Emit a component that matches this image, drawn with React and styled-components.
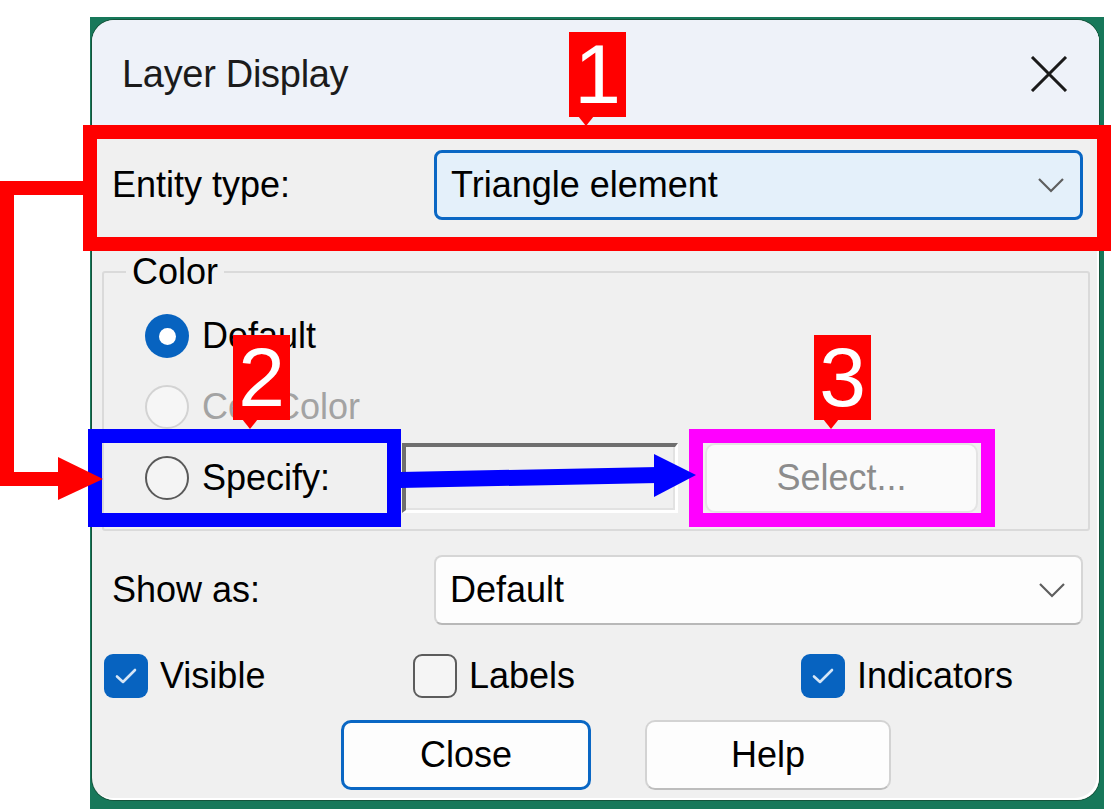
import React from "react";
import styled, { createGlobalStyle, css } from "styled-components";

const GlobalStyle = createGlobalStyle`
  html, body { margin: 0; padding: 0; background: #ffffff; }
  body { font-family: "Liberation Sans", Arial, sans-serif; }
  * { box-sizing: border-box; }
`;

const Page = styled.div`
  position: relative;
  width: 1111px;
  height: 809px;
  overflow: hidden;
  padding: 17px 7px 0 90px;
  background: #ffffff;
`;

const Desktop = styled.div`
  height: 792px;
  padding: 3px 5px 9px 2px;
  background: #17785a;
`;

const Dialog = styled.div`
  height: 100%;
  display: flex;
  flex-direction: column;
  border-radius: 22px;
  overflow: hidden;
  background: #f0f0f0;
  box-shadow: 0 0 0 1px rgba(20, 60, 40, 0.6), inset -2px -2px 0 #ffffff;
  font-size: 36px;
  color: #000;
`;

const TitleBar = styled.div`
  height: 108px;
  flex: none;
  display: flex;
  align-items: center;
  justify-content: space-between;
  padding: 0 31px 0 30px;
  background: #eef2f9;
`;

const Title = styled.span`
  font-size: 38px;
  color: #1b1b1b;
  letter-spacing: -0.3px;
`;

const CloseGlyph = styled.svg`
  width: 38px;
  height: 36px;
  display: block;
`;

const Body = styled.div`
  flex: 1;
  display: flex;
  flex-direction: column;
  padding: 22px 16px 10px 20px;
`;

const FieldRow = styled.div`
  display: grid;
  grid-template-columns: 322px 1fr;
  align-items: center;
  height: 70px;
  margin-top: ${(p) => p.$mt || 0}px;
`;

const Label = styled.span`
  color: ${(p) => (p.$disabled ? "#a3a3a3" : "#000")};
  white-space: nowrap;
`;

const Combo = styled.div`
  height: 70px;
  display: flex;
  align-items: center;
  justify-content: space-between;
  padding: 0 15px 0 14px;
  border-radius: 8px;
  ${(p) =>
    p.$focused
      ? css`
          background: #e4f0fa;
          border: 3px solid #0a67c4;
        `
      : css`
          background: #fdfdfd;
          border: 2px solid #d6d6d6;
          border-bottom-color: #b8b8b8;
        `}
`;

const Chevron = styled.svg`
  width: 28px;
  height: 16px;
  display: block;
`;

const GroupBox = styled.div`
  position: relative;
  margin: 51px -7px 0 -10px;
  height: 260px;
  border: 2px solid #dadada;
  border-radius: 3px;
  padding: 41px 0 0 41px;
  display: flex;
  flex-direction: column;
`;

const GroupLegend = styled.span`
  position: absolute;
  top: -21px;
  left: 22px;
  padding: 0 6px;
  background: #f0f0f0;
  line-height: 40px;
`;

const OptionRow = styled.div`
  display: flex;
  align-items: center;
  height: ${(p) => p.$h || 44}px;
  margin-top: ${(p) => p.$mt || 0}px;
`;

const RadioLabel = styled.label`
  display: flex;
  align-items: center;
  gap: 13px;
  width: ${(p) => (p.$w ? `${p.$w}px` : "auto")};
  flex: none;
`;

const Radio = styled.span`
  width: 44px;
  height: 44px;
  flex: none;
  border-radius: 50%;
  display: flex;
  align-items: center;
  justify-content: center;
  ${(p) =>
    p.$checked
      ? css`
          background: #0763c0;
          &::after {
            content: "";
            width: 17px;
            height: 17px;
            border-radius: 50%;
            background: #ffffff;
          }
        `
      : p.$disabled
      ? css`
          border: 2px solid #d3d3d3;
          background: #f6f6f6;
        `
      : css`
          border: 2px solid #595959;
          background: #f4f4f4;
        `}
`;

const Swatch = styled.div`
  width: 276px;
  height: 70px;
  flex: none;
  background: #f0f0f0;
  border-top: 4px solid #6e6e6e;
  border-left: 4px solid #6e6e6e;
  border-right: 3px solid #ffffff;
  border-bottom: 3px solid #ffffff;
  box-shadow: inset -2px -2px 0 #e2e2e2;
`;

const PushButton = styled.div`
  width: ${(p) => p.$w}px;
  height: 70px;
  flex: none;
  display: flex;
  align-items: center;
  justify-content: center;
  border-radius: 10px;
  ${(p) =>
    p.$variant === "default"
      ? css`
          background: #fdfdfd;
          border: 3px solid #0a67c4;
          color: #000;
        `
      : p.$variant === "disabled"
      ? css`
          background: #fafafa;
          border: 2px solid #e4e4e4;
          color: #8c8c8c;
        `
      : css`
          background: #fdfdfd;
          border: 2px solid #d3d3d3;
          border-bottom-color: #bdbdbd;
          color: #000;
        `}
  margin-left: ${(p) => p.$ml || 0}px;
`;

const CheckRow = styled.div`
  display: grid;
  grid-template-columns: 309px 388px auto;
  align-items: center;
  height: 44px;
  margin: 29px 0 0 -8px;
`;

const CheckLabel = styled.label`
  display: flex;
  align-items: center;
  gap: 12px;
`;

const Box = styled.span`
  width: 44px;
  height: 44px;
  flex: none;
  border-radius: 9px;
  display: flex;
  align-items: center;
  justify-content: center;
  ${(p) =>
    p.$checked
      ? css`
          background: #0763c0;
        `
      : css`
          border: 2px solid #5c5c5c;
          background: #f5f5f5;
        `}
`;

const ButtonRow = styled.div`
  display: flex;
  gap: 54px;
  margin-top: 22px;
  padding-left: 229px;
`;

/* ---------- annotation overlays ---------- */

const Overlay = styled.svg`
  position: absolute;
  left: 0;
  top: 0;
  width: 1111px;
  height: 809px;
  pointer-events: none;
`;

const Frame = styled.div`
  position: absolute;
  left: ${(p) => p.$x}px;
  top: ${(p) => p.$y}px;
  width: ${(p) => p.$w}px;
  height: ${(p) => p.$h}px;
  border: 14px solid ${(p) => p.$color};
  pointer-events: none;
`;

const Badge = styled.div`
  position: absolute;
  left: ${(p) => p.$x}px;
  top: ${(p) => p.$y}px;
  width: 57px;
  height: 85px;
  background: #ff0000;
  color: #ffffff;
  font-family: "Liberation Sans", Arial, sans-serif;
  font-size: 84px;
  line-height: 85px;
  text-align: center;
  &::after {
    content: "";
    position: absolute;
    left: 9px;
    bottom: -9px;
    border-left: 8px solid transparent;
    border-right: 8px solid transparent;
    border-top: 10px solid #ff0000;
  }
`;

const Check = () => (
  <svg width="26" height="20" viewBox="0 0 26 20">
    <path d="M4 10.5 L10 16 L22 4" fill="none" stroke="#d6e6f6" strokeWidth="2.6" strokeLinecap="round" strokeLinejoin="round" />
  </svg>
);

const Down = () => (
  <Chevron viewBox="0 0 28 16">
    <path d="M2 2 L14 14 L26 2" fill="none" stroke="#5e5e5e" strokeWidth="2.2" />
  </Chevron>
);

export default function App() {
  return (
    <>
      <GlobalStyle />
      <Page>
        <Desktop>
          <Dialog>
            <TitleBar>
              <Title>Layer Display</Title>
              <CloseGlyph viewBox="0 0 38 36">
                <path d="M2 1 L36 35 M36 1 L2 35" stroke="#1a1a1a" strokeWidth="3" />
              </CloseGlyph>
            </TitleBar>
            <Body>
              <FieldRow>
                <Label>Entity type:</Label>
                <Combo $focused>
                  <span>Triangle element</span>
                  <Down />
                </Combo>
              </FieldRow>

              <GroupBox>
                <GroupLegend>Color</GroupLegend>
                <OptionRow>
                  <RadioLabel>
                    <Radio $checked />
                    <Label>Default</Label>
                  </RadioLabel>
                </OptionRow>
                <OptionRow $mt={27}>
                  <RadioLabel>
                    <Radio $disabled />
                    <Label $disabled>Cell Color</Label>
                  </RadioLabel>
                </OptionRow>
                <OptionRow $mt={14} $h={70}>
                  <RadioLabel $w={257}>
                    <Radio />
                    <Label>Specify:</Label>
                  </RadioLabel>
                  <Swatch />
                  <PushButton $w={273} $ml={27} $variant="disabled">
                    Select...
                  </PushButton>
                </OptionRow>
              </GroupBox>

              <FieldRow $mt={24}>
                <Label>Show as:</Label>
                <Combo>
                  <span>Default</span>
                  <Down />
                </Combo>
              </FieldRow>

              <CheckRow>
                <CheckLabel>
                  <Box $checked>
                    <Check />
                  </Box>
                  <Label>Visible</Label>
                </CheckLabel>
                <CheckLabel>
                  <Box />
                  <Label>Labels</Label>
                </CheckLabel>
                <CheckLabel>
                  <Box $checked>
                    <Check />
                  </Box>
                  <Label>Indicators</Label>
                </CheckLabel>
              </CheckRow>

              <ButtonRow>
                <PushButton $w={250} $variant="default">Close</PushButton>
                <PushButton $w={246}>Help</PushButton>
              </ButtonRow>
            </Body>
          </Dialog>
        </Desktop>

        <Frame $x={83} $y={125} $w={1028} $h={126} $color="#ff0000" />
        <Frame $x={88} $y={429} $w={313} $h={98} $color="#0000ff" />
        <Frame $x={689} $y={429} $w={306} $h={98} $color="#ff00ff" />

        <Overlay viewBox="0 0 1111 809">
          <polyline points="83,188 7,188 7,479 62,479" fill="none" stroke="#ff0000" strokeWidth="14" strokeLinejoin="miter" />
          <polygon points="58,457 58,500 103,479" fill="#ff0000" />
          <line x1="400" y1="480" x2="658" y2="475" stroke="#0000ff" strokeWidth="16" />
          <polygon points="654,454 654,497 696,475" fill="#0000ff" />
        </Overlay>

        <Badge $x={569} $y={32}>1</Badge>
        <Badge $x={233} $y={335}>2</Badge>
        <Badge $x={814} $y={335}>3</Badge>
      </Page>
    </>
  );
}
